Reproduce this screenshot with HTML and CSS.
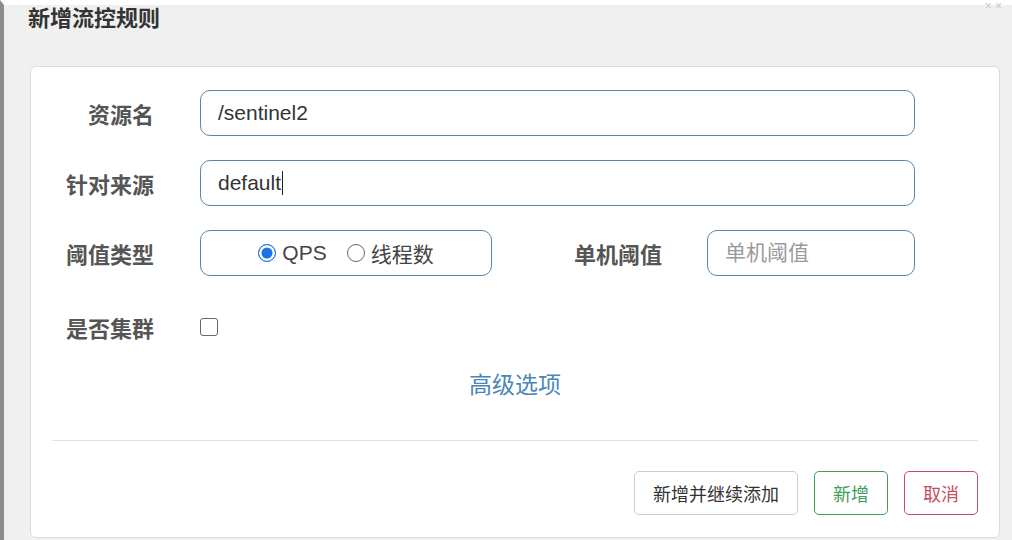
FILE: index.html
```
<!DOCTYPE html>
<html lang="zh-CN">
<head>
    <meta charset="UTF-8">
    <meta name="viewport" content="width=device-width, initial-scale=1.0">
    <title>新增流控规则</title>
    <link rel="stylesheet" href="styles.css">
</head>
<body>
    <div class="page">
        <h2 class="dialog-title">新增流控规则</h2>
        <span class="close-mark">× ×</span>

        <div class="card">
            <form class="rule-form">
                <div class="row">
                    <label class="label" for="resource">资源名</label>
                    <input class="field wide" type="text" id="resource" value="/sentinel2">
                </div>

                <div class="row">
                    <label class="label" for="limitApp">针对来源</label>
                    <div class="field wide field-text">default<span class="caret"></span></div>
                </div>

                <div class="row">
                    <label class="label">阈值类型</label>
                    <div class="radio-box">
                        <label class="radio"><span class="dot checked"></span>QPS</label>
                        <label class="radio"><span class="dot"></span>线程数</label>
                    </div>
                    <label class="label label-count" for="count">单机阈值</label>
                    <input class="field narrow" type="text" id="count" placeholder="单机阈值">
                </div>

                <div class="row row-cluster">
                    <label class="label">是否集群</label>
                    <span class="check"></span>
                </div>

                <div class="advanced"><a href="#">高级选项</a></div>
            </form>

            <hr class="divider">

            <div class="actions">
                <button class="btn btn-default">新增并继续添加</button>
                <button class="btn btn-ok">新增</button>
                <button class="btn btn-cancel">取消</button>
            </div>
        </div>
    </div>
</body>
</html>
```

FILE: styles.css
```
html, body { margin: 0; padding: 0; }
body { background: #f0f0f0; font-family: "Liberation Sans", "Noto Sans CJK SC", sans-serif; overflow: hidden; }
.page { position: relative; height: 535px; border-top: 5px solid #fff; border-left: 4px solid #8c8c8c; }
.dialog-title { margin: 0; padding-left: 24px; font-size: 22px; line-height: 28px; font-weight: bold; color: #333; }
.close-mark { position: absolute; right: 10px; top: -6px; font-size: 12px; color: #c8c8c8; }

.card { margin: 33px 0 0 26px; width: 968px; height: 470px; background: #fff; border: 1px solid #dcdcdc; border-radius: 6px; }
.rule-form { padding-top: 23px; }
.row { display: flex; align-items: center; height: 46px; margin-bottom: 24px; }
.row-cluster { margin-top: 28px; margin-bottom: 0; }
.label { width: 123px; margin-right: 46px; text-align: right; font-size: 22px; font-weight: bold; color: #555; flex-shrink: 0; }
.label-count { width: 92px; margin-left: 78px; margin-right: 45px; }

.field { box-sizing: border-box; height: 46px; padding: 0 17px; border: 1.5px solid #5a86ab; border-radius: 10px; font: 21px "Liberation Sans", "Noto Sans CJK SC", sans-serif; color: #333; outline: none; }
.field::placeholder { color: #9a9a9a; }
.field-text { display: flex; align-items: center; }
.caret { display: inline-block; width: 1px; height: 24px; margin-left: 1px; background: #222; }
.wide { width: 715px; }
.narrow { width: 208px; }

.radio-box { box-sizing: border-box; display: flex; justify-content: center; align-items: center; gap: 20px; width: 292px; height: 46px; border: 1.5px solid #5a86ab; border-radius: 10px; }
.radio { display: flex; align-items: center; gap: 6px; font-size: 21px; color: #444; }
.dot { box-sizing: border-box; width: 18px; height: 18px; border: 1.5px solid #666; border-radius: 50%; }
.dot.checked { border: 1.5px solid #1a73e8; background: #1a73e8; box-shadow: inset 0 0 0 2.5px #fff; }
.check { box-sizing: border-box; width: 18px; height: 18px; border: 1.5px solid #666; border-radius: 3px; }

.advanced { margin-top: 20px; text-align: center; line-height: 30px; }
.advanced a { font-size: 23px; color: #4a86b8; text-decoration: none; }

.divider { margin: 37px 21px 0; border: 0; border-top: 1px solid #e3e3e3; }
.actions { display: flex; justify-content: flex-end; gap: 16px; margin: 30px 21px 0; }
.btn { height: 44px; padding: 0; background: #fff; border: 1.5px solid #ccc; border-radius: 5px; font: 18px "Liberation Sans", "Noto Sans CJK SC", sans-serif; color: #333; }
.btn-default { width: 164px; }
.btn-ok { width: 74px; border-color: #3f9d5a; color: #3f9d5a; }
.btn-cancel { width: 74px; border-color: #c4505d; color: #c4505d; }
```
